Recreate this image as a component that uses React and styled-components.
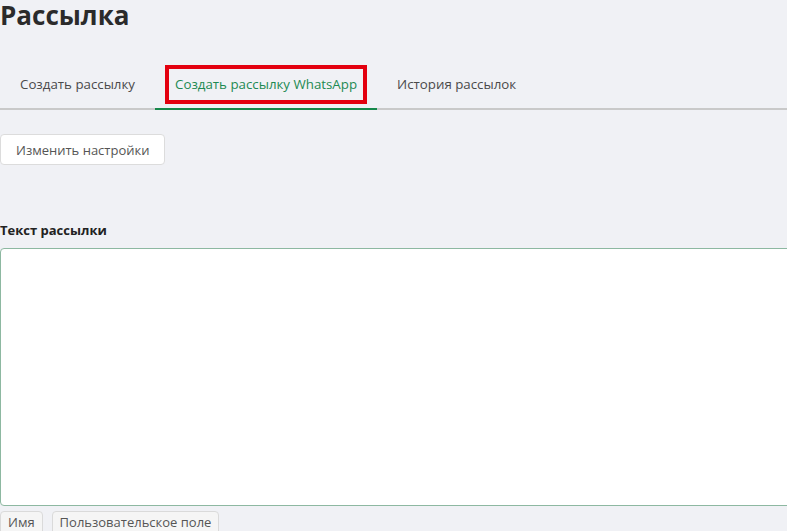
import React, { useState } from 'react';
import styled, { createGlobalStyle } from 'styled-components';

const GlobalStyle = createGlobalStyle`
  html, body {
    margin: 0;
    padding: 0;
    background: #f0f1f5;
    font-family: "Open Sans", "Noto Sans", sans-serif;
    overflow: hidden;
  }
`;

const tabs = ['Создать рассылку', 'Создать рассылку WhatsApp', 'История рассылок'];
const fields = ['Имя', 'Пользовательское поле'];

function App() {
  const [activeTab, setActiveTab] = useState(1);

  return <Page>
    <GlobalStyle />
    <Title>Рассылка</Title>
    <TabBar>
      {tabs.map((tab, i) => (
        <Tab key={tab} active={i === activeTab} onClick={() => setActiveTab(i)}>
          {i === activeTab ? <Marked>{tab}</Marked> : tab}
        </Tab>
      ))}
    </TabBar>
    <SettingsButton>Изменить настройки</SettingsButton>
    <Label>Текст рассылки</Label>
    <MessageBox />
    <Fields>
      {fields.map((field) => (
        <FieldButton key={field}>{field}</FieldButton>
      ))}
    </Fields>
  </Page>
}

const Page = styled.div`
  display: flex;
  flex-direction: column;
  align-items: flex-start;
  width: 787px;
  height: 531px;
  overflow: hidden;
`;

const Title = styled.h1`
  margin: 0;
  font-size: 26px;
  line-height: 30px;
  font-weight: 700;
  color: #2b2b2b;
`;

const TabBar = styled.div`
  display: flex;
  align-self: stretch;
  margin-top: 30px;
  border-bottom: 2px solid #c9c9c9;
`;

const Tab = styled.div`
  padding: 0 20px;
  height: 48px;
  display: flex;
  align-items: center;
  margin-bottom: -2px;
  border-bottom: 2px solid ${(p) => (p.active ? '#15884a' : 'transparent')};
  font-size: 13.3px;
  color: ${(p) => (p.active ? '#1d8a52' : '#4a4a4a')};
  cursor: pointer;
`;

const Marked = styled.span`
  display: inline-block;
  padding: 8px 7px;
  margin: 0 -7px;
  outline: 4px solid #e3000f;
  outline-offset: -1px;
  line-height: 17px;
`;

const SettingsButton = styled.button`
  flex-shrink: 0;
  margin-top: 24px;
  height: 31px;
  padding: 0 15px;
  background: #fff;
  border: 1px solid #dcdcdc;
  border-radius: 4px;
  font-family: inherit;
  font-size: 13px;
  color: #555;
`;

const Label = styled.div`
  margin-top: 56px;
  font-size: 13px;
  font-weight: 700;
  color: #222;
`;

const MessageBox = styled.textarea`
  flex-shrink: 0;
  margin-top: 9px;
  width: 800px;
  height: 258px;
  box-sizing: border-box;
  background: #fff;
  border: 1px solid #8db8a1;
  border-radius: 4px;
  resize: none;
  outline: none;
`;

const Fields = styled.div`
  display: flex;
  gap: 9px;
  margin-top: 5px;
`;

const FieldButton = styled.button`
  height: 28px;
  padding: 0 7px 6px;
  background: #f5f5f5;
  border: 1px solid #dadada;
  border-radius: 4px 4px 0 0;
  font-family: inherit;
  font-size: 13px;
  color: #555;
`;

export default App
